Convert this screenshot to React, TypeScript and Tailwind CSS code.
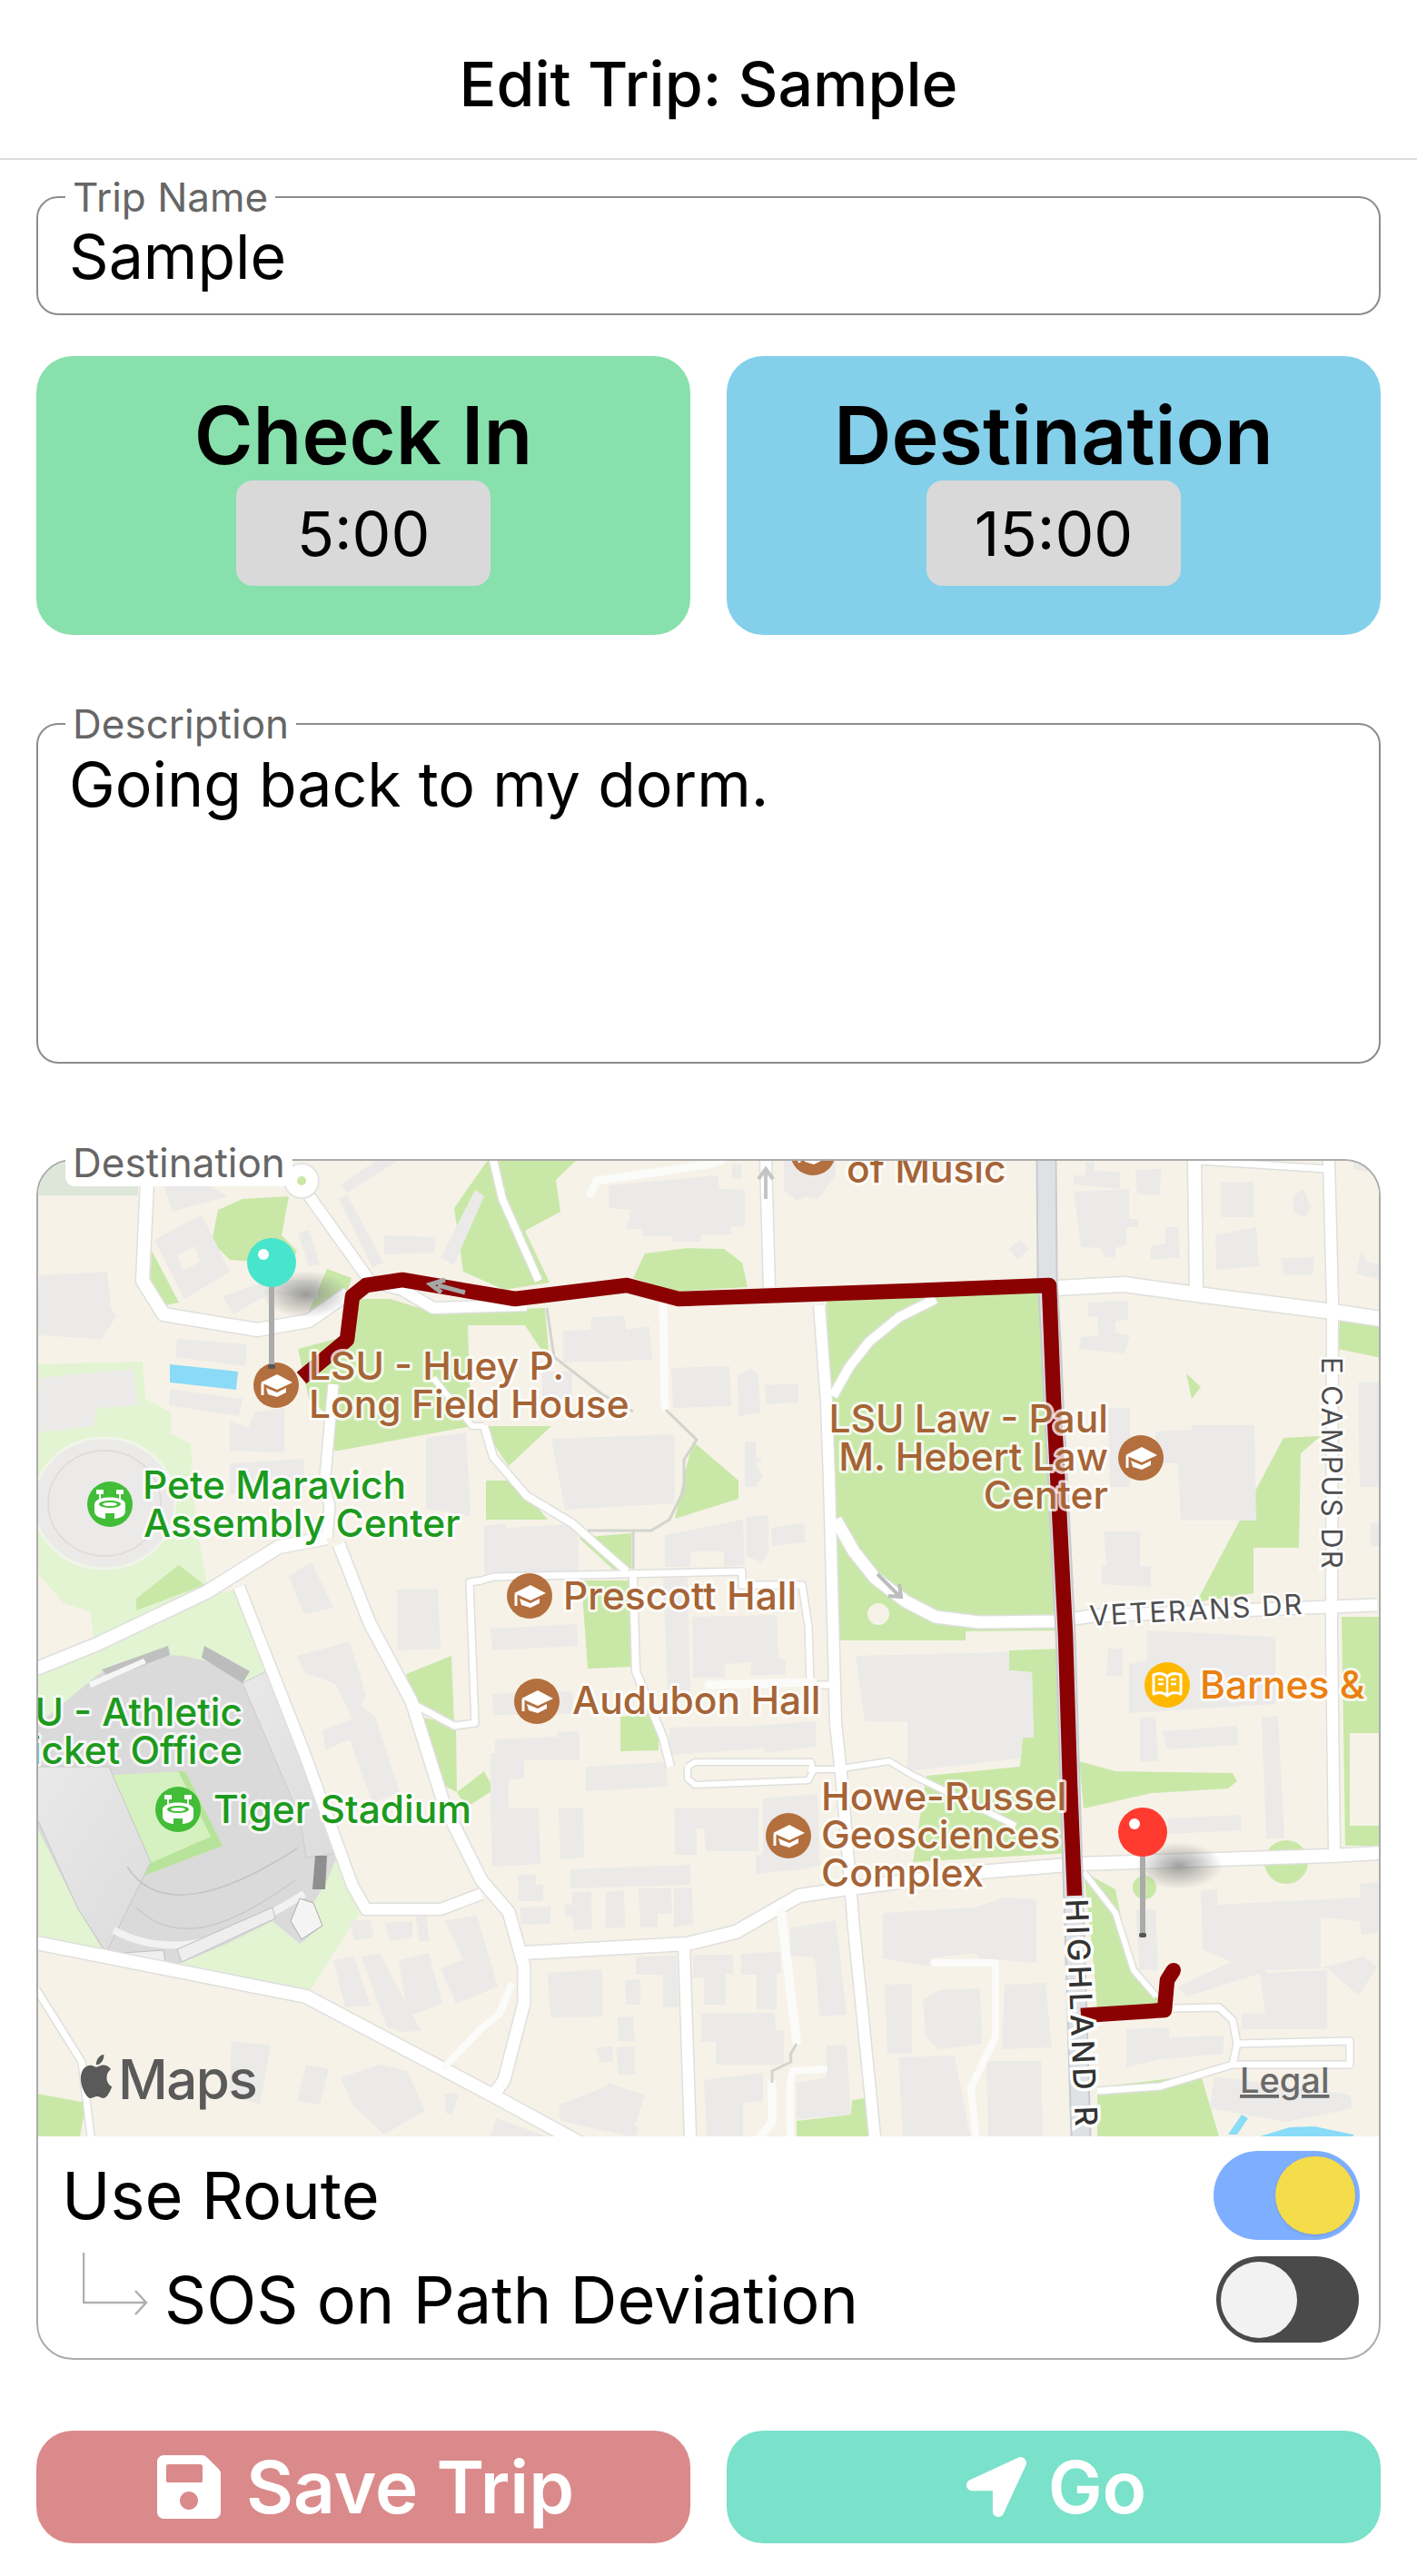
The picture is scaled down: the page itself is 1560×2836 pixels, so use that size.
import { FaSave, FaLocationArrow } from 'react-icons/fa'

const LAND = '#F6F2E8'
const GREEN = '#C9E8A8'
const PALE = '#E2F4D2'
const BLD = '#EBEAE8'
const WATER = '#8ADBF7'
const BROWN = '#A66436'
const DARKGREEN = '#1C9A1D'

const PALE_AREAS = [
  '40,1502 157,1499 160,1540 188,1555 188,1578 210,1590 215,1670 228,1745 103,1803 100,1775 70,1765 40,1730',
  '40,1840 227,1755 263,1750 388,2076 397,2104 337,2198 40,2139',
]

const GREENS = [
  '197,1723 225,1745 150,1773 150,1760',
  '240,1332 267,1320 318,1317 310,1360 327,1377 317,1400 293,1390 253,1387 233,1367',
  '167,1377 197,1434 168,1440 165,1420',
  '360,1397 387,1407 383,1420 340,1444',
  '537,1277 635,1277 612,1299 617,1334 578,1355 605,1412 555,1420 510,1400 500,1330',
  '328,1485 385,1470 390,1430 430,1430 477,1445 600,1440 605,1500 578,1459 515,1459 517,1520 520,1570 373,1597 360,1597 363,1560 340,1540',
  '530,1570 607,1570 560,1614',
  '697,1407 710,1380 757,1374 797,1375 817,1390 823,1417 743,1422',
  '910,1432 1160,1420 1180,1795 925,1797 915,1600',
  '763,1587 813,1630 813,1650 743,1672 753,1625',
  '535,1630 567,1630 603,1673 535,1673',
  '637,1693 695,1688 695,1727 675,1728',
  '640,1740 695,1740 695,1835 647,1837',
  '683,1890 725,1885 725,1927 683,1928',
  '447,1843 497,1823 500,1897 457,1873',
  '463,1890 502,1900 503,1973 483,1963',
  '503,1973 533,1950 540,1963 540,1973 513,1990',
  '924,1795 1063,1795 1063,1806 924,1806',
  '1111,1817 1170,1815 1178,2040 1005,2050 1020,1955 1123,1945 1126,1913 1138,1913 1136,1841 1111,1839',
  '1188,1939 1228,1950 1357,1952 1362,1961 1352,1969 1268,1974 1193,1991',
  '1193,2061 1228,2080 1243,2154 1273,2198 1278,2206 1208,2213 1203,2150',
  '1477,1780 1520,1780 1520,1908 1486,1908 1486,2010 1520,2010 1520,2032 1481,2032',
  '1208,2298 1322,2284 1342,2352 1208,2352',
  '877,2335 937,2328 938,2312 952,2310 957,2352 877,2352',
  '1475,1455 1520,1457 1520,1495 1473,1485',
  '1306,1512 1322,1527 1312,1540',
  '40,2305 95,2315 88,2352 40,2352',
]

const BUILDINGS = [
  '180,1304 230,1304 250,1317 190,1334',
  '43,1404 118,1400 122,1440 128,1449 112,1474 40,1470',
  '245,1427 297,1409 350,1409 350,1430 297,1424 257,1447',
  '328,1357 340,1354 352,1392 340,1394',
  '373,1320 382,1315 422,1390 410,1395',
  '423,1360 480,1362 478,1379 423,1381',
  '523,1310 533,1317 500,1392 485,1385',
  '375,1304 415,1277 440,1277 382,1313',
  '195,1474 272,1480 270,1504 193,1494',
  '187,1529 267,1540 263,1559 186,1547',
  '253,1565 273,1572 280,1555 313,1550 313,1599 253,1597',
  '43,1517 147,1507 152,1547 107,1550 103,1570 40,1577',
  '253,1611 335,1606 335,1640 253,1645',
  '469,1583 513,1577 518,1669 469,1661',
  '318,1735 343,1720 367,1770 335,1777',
  '437,1750 482,1749 485,1815 437,1817',
  '327,1823 385,1807 403,1867 397,1877 413,1890 440,1973 410,1985 385,1915 358,1927 355,1905 388,1892 370,1855 360,1850 335,1842',
  '385,2115 408,2113 411,2132 390,2137',
  '423,2117 454,2115 454,2132 429,2137',
  '457,2110 470,2110 472,2137 462,2137',
  '490,2115 525,2108 548,2187 502,2206 485,2167 510,2158',
  '367,2158 390,2154 408,2208 380,2210',
  '398,2154 418,2150 444,2200 464,2236 444,2237 426,2232',
  '439,2158 472,2150 487,2206 449,2220',
  '255,2247 298,2252 286,2317 252,2306',
  '337,2273 362,2278 352,2317 327,2313',
  '375,2287 418,2273 449,2280 467,2324 423,2350 388,2317',
  '490,2305 505,2305 498,2328 490,2326',
  '546,2332 602,2352 540,2352',
  '617,2317 673,2295 709,2306 694,2352 617,2335',
  '540,1990 593,1990 595,2052 542,2055',
  '540,1930 560,1930 560,1990 540,1990',
  '615,1990 642,1990 643,2045 617,2047',
  '743,1990 835,1990 835,2038 777,2038 775,2013 767,2013 767,2042 743,2042',
  '832,2042 902,2042 903,2053 883,2058 832,2063',
  '840,1980 900,1975 902,2042 840,2042',
  '628,2058 760,2053 760,2075 628,2079',
  '570,2064 590,2064 590,2075 598,2075 598,2093 571,2093',
  '573,2100 606,2099 606,2118 573,2119',
  '630,2083 651,2083 652,2123 632,2125 630,2110 622,2110 622,2097 630,2097',
  '667,2083 687,2081 688,2122 667,2123',
  '703,2079 739,2079 740,2107 724,2107 724,2121 705,2122',
  '742,2079 762,2078 763,2118 742,2122',
  '603,2172 663,2168 663,2220 606,2221',
  '700,2154 745,2153 747,2210 730,2210 730,2174 700,2174',
  '688,2180 705,2179 705,2207 689,2207',
  '680,2221 697,2220 699,2247 681,2247',
  '656,2254 674,2253 675,2270 661,2270',
  '678,2254 699,2253 699,2284 681,2284',
  '670,2293 710,2307 700,2337 660,2327',
  '617,2315 703,2342 700,2352 615,2330',
  '763,2152 807,2152 807,2173 799,2173 799,2207 775,2207 775,2177 763,2177',
  '816,2151 859,2149 860,2172 855,2172 855,2212 833,2212 833,2174 816,2174',
  '772,2217 853,2216 854,2235 863,2235 863,2273 788,2273 788,2248 772,2248',
  '775,2290 840,2282 840,2313 818,2315 818,2352 778,2352',
  '870,2123 920,2114 932,2218 902,2220 897,2155 870,2153',
  '877,2293 910,2287 910,2252 932,2252 937,2328 877,2333',
  '972,2106 1073,2100 1106,2089 1141,2091 1141,2161 1079,2156 1073,2150 1024,2156 1024,2165 972,2156',
  '974,2185 1004,2184 1004,2261 977,2261',
  '1016,2202 1034,2191 1079,2189 1081,2250 1034,2256 1019,2243',
  '1106,2185 1151,2183 1158,2254 1103,2256',
  '989,2265 1051,2263 1068,2352 994,2352',
  '1086,2269 1146,2269 1148,2352 1088,2352',
  '533,1680 557,1677 557,1682 636,1678 637,1730 533,1733',
  '607,1584 742,1579 743,1655 622,1662',
  '732,1690 818,1673 820,1723 797,1725 797,1708 760,1708 760,1725 732,1725',
  '822,1670 846,1668 846,1710 838,1720 822,1713',
  '849,1682 885,1677 887,1698 850,1702',
  '540,1793 635,1788 636,1812 542,1817',
  '730,1737 757,1737 760,1863 735,1860',
  '762,1780 855,1778 857,1825 865,1827 865,1843 827,1845 827,1830 798,1832 798,1847 763,1847',
  '542,1865 630,1862 632,1887 543,1888',
  '545,1915 613,1912 613,1907 638,1906 638,1938 577,1938 577,1958 558,1960 558,1937 545,1935',
  '645,1945 733,1940 735,1967 645,1972',
  '737,1902 832,1900 898,1895 898,1923 842,1930 840,1925 737,1932',
  '942,1823 1111,1819 1111,1839 1136,1841 1138,1913 1126,1913 1123,1936 999,1950 999,1895 952,1895',
  '1243,1832 1263,1828 1263,1795 1404,1802 1404,1876 1243,1886',
  '1220,1815 1236,1815 1236,1845 1218,1845',
  '1280,1906 1362,1900 1363,1921 1285,1926',
  '1255,1891 1272,1890 1275,1939 1255,1939',
  '1285,2002 1366,1998 1366,2015 1286,2019',
  '1389,1891 1407,1889 1414,2024 1394,2024',
  '1322,2082 1340,2080 1340,2097 1497,2089 1497,2074 1517,2072 1517,2128 1499,2130 1497,2115 1454,2111 1454,2167 1501,2154 1516,2165 1496,2197 1461,2167 1394,2169 1394,2224 1387,2172 1324,2147',
  '1297,2187 1360,2158 1389,2172 1307,2198',
  '1394,2172 1461,2169 1461,2234 1367,2234 1367,2217 1394,2217',
  '1240,2234 1287,2232 1287,2243 1347,2241 1347,2261 1277,2267 1240,2276',
  '1250,2102 1272,2102 1275,2169 1255,2169',
  '1337,2286 1486,2306 1489,2321 1417,2336 1332,2321',
  '1182,1312 1243,1309 1243,1342 1253,1342 1253,1351 1240,1351 1240,1370 1228,1374 1228,1384 1217,1384 1212,1374 1190,1373',
  '1182,1294 1195,1294 1195,1279 1205,1279 1205,1289 1233,1290 1233,1309 1182,1304',
  '1250,1288 1278,1287 1277,1315 1252,1315',
  '1267,1372 1283,1369 1283,1351 1297,1351 1299,1384 1267,1387',
  '1344,1302 1380,1301 1380,1340 1344,1340',
  '1338,1360 1383,1351 1386,1394 1339,1398',
  '1423,1317 1435,1309 1443,1329 1437,1340 1425,1335',
  '1410,1385 1447,1384 1445,1403 1414,1404',
  '1493,1402 1498,1379 1507,1390 1520,1392 1520,1409',
  '1490,1277 1520,1277 1520,1292 1490,1287',
  '1110,1375 1123,1365 1133,1375 1120,1387',
  '1198,1434 1242,1432 1242,1452 1228,1455 1228,1467 1244,1470 1238,1490 1188,1485 1190,1472 1210,1470 1208,1450 1198,1449',
  '1220,1550 1244,1550 1244,1637 1222,1637',
  '1272,1576 1312,1574 1312,1569 1381,1569 1383,1674 1300,1674 1297,1611 1272,1611',
  '1495,1522 1520,1522 1520,1637 1497,1637',
  '1215,1686 1255,1686 1255,1724 1267,1724 1267,1747 1213,1744 1213,1724 1218,1724',
  '1509,1677 1520,1677 1520,1702 1509,1702',
  '670,1305 790,1294 792,1309 820,1310 820,1350 805,1350 805,1359 772,1359 772,1367 740,1367 740,1361 708,1361 708,1353 689,1353 695,1332 670,1330',
  '806,1282 816,1282 816,1298 806,1298',
  '863,1277 920,1277 920,1295 900,1320 887,1317 877,1322 863,1310',
  '620,1465 650,1464 652,1450 687,1449 690,1464 715,1460 718,1497 620,1500',
  '597,1510 630,1510 630,1540 597,1540',
  '739,1506 803,1504 805,1548 741,1550',
  '812,1514 827,1506 835,1514 837,1555 813,1559',
  '842,1525 879,1523 879,1544 844,1546',
  '820,1587 832,1587 832,1605 840,1605 832,1612 840,1625 832,1637 820,1637',
]

// main streets, drawn twice: grey casing first, then white
const ROADS: { pts: string; w: number }[] = [
  { pts: '163,1277 157,1410 180,1447 283,1464 340,1454 383,1424', w: 14 },
  { pts: '332,1305 407,1410 443,1420 477,1440 580,1437', w: 12 },
  { pts: '367,1524 357,1637 363,1657 360,1693', w: 11 },
  { pts: '360,1693 307,1703 227,1753 107,1810 40,1837', w: 14 },
  { pts: '263,1747 335,1930 388,2076 403,2102 485,2102 530,2085', w: 12 },
  { pts: '373,1700 407,1787 453,1873 490,1990 530,2070 560,2105 577,2165 577,2205 555,2290 543,2307', w: 13 },
  { pts: '40,2139 337,2198 541,2306 640,2360', w: 14 },
  { pts: '577,2150 757,2140 810,2127 880,2087 927,2080 1078,2061 1188,2052 1466,2043 1520,2040', w: 14 },
  { pts: '843,1277 847,1417', w: 12 },
  { pts: '902,1437 910,1544 913,1630 920,1897 927,1963 940,2123 963,2352', w: 12 },
  { pts: '753,2140 760,2352', w: 12 },
  { pts: '1030,1430 990,1450 957,1477 935,1505 917,1537', w: 10 },
  { pts: '920,1673 940,1708 963,1737 997,1763 1030,1780 1078,1786 1163,1785 1203,1779 1516,1767', w: 13 },
  { pts: '1163,1418 1237,1414 1310,1424 1467,1444 1520,1452', w: 16 },
  { pts: '1315,1277 1317,1420', w: 14 },
  { pts: '1463,1277 1467,1434 1466,1800 1469,2039', w: 12 },
  { pts: '1320,1278 1462,1287', w: 7 },
  { pts: '543,1277 553,1320 593,1410', w: 8 },
  { pts: '533,1570 543,1604 580,1647 630,1677 690,1730', w: 8 },
  { pts: '477,1517 520,1570 533,1570', w: 6 },
  { pts: '530,1740 543,1736 817,1730 817,1745 883,1745 890,1790 892,1855 913,1855', w: 7 },
  { pts: '530,1740 517,1742 523,1897 500,1900 457,1877', w: 7 },
  { pts: '697,1735 700,1840 730,1913 738,1945', w: 8 },
  { pts: '757,1945 765,1940 893,1940 895,1950 890,1960 765,1965 757,1958 757,1945', w: 6 },
  { pts: '890,1948 920,1948 979,1939 1004,1954 1118,2010', w: 6 },
  { pts: '1208,2302 1277,2297 1357,2273 1486,2273 1486,2247 1362,2250 1357,2224 1342,2210 1292,2211', w: 7 },
  { pts: '1357,2273 1362,2250', w: 7 },
  { pts: '1193,2061 1228,2106 1248,2169 1273,2198', w: 6 },
  { pts: '40,2190 90,2270 100,2352', w: 7 },
]

// footpaths without a casing
const PATHS = [
  { pts: '650,1314 657,1300 780,1282 795,1277', w: 9 },
  { pts: '730,1437 732,1550', w: 9 },
  { pts: '860,2105 870,2190 877,2247', w: 10 },
  { pts: '907,2278 873,2280 870,2293 870,2352', w: 8 },
  { pts: '850,2293 850,2337 837,2352', w: 9 },
  { pts: '562,2187 550,2217 530,2233 490,2275', w: 8 },
  { pts: '1029,2161 1096,2161 1096,2243 1069,2298 1074,2350', w: 8 },
  { pts: '780,1855 895,1852', w: 9 },
]

const GREY_PATHS = [
  '733,1552 767,1585 753,1607 753,1640 737,1673 717,1685 647,1685',
  '697,1685 697,1727',
  '697,1554 663,1535 610,1494 602,1440',
  '877,2250 870,2262 871,2270 850,2280 850,2293',
]

const HIGHWAY = '1152,1277 1153,1407 1157,1477 1160,1543 1173,1800 1178,1965 1190,2352'

// the road label sits on the route between these two legs
const ROUTE_NORTH =
  '332,1517 382,1475 388,1427 403,1415 443,1409 567,1430 690,1415 747,1430 1030,1420 1155,1415 1160,1543 1173,1800 1178,1965 1183,2087'
const ROUTE_SOUTH = '1190,2219 1282,2213 1285,2180 1292,2169'

function MapText({ x, y, lines, fill, anchor = 'start', step = 42 }: { x: number; y: number; lines: string[]; fill: string; anchor?: 'start' | 'end'; step?: number }) {
  return (
    <text
      fontFamily="Inter, sans-serif"
      fontSize={42.5}
      fontWeight={500}
      fill={fill}
      stroke="#FFFFFF"
      strokeOpacity={0.8}
      strokeWidth={6}
      paintOrder="stroke"
      textAnchor={anchor}
      strokeLinejoin="round"
    >
      {lines.map((l, i) => (
        <tspan key={l} x={x} y={y + i * step}>
          {l}
        </tspan>
      ))}
    </text>
  )
}

function CapPoi({ x, y }: { x: number; y: number }) {
  return (
    <g transform={`translate(${x} ${y})`}>
      <circle r={25} fill="#B36F3E" />
      <path d="M1 -12 L18 -3 L1 5 L-17 -3 Z" fill="#FFFFFF" />
      <path d="M-11 3 L1 8 L11 3 L11 8 L1 13 L-9 10 Z" fill="#FFFFFF" />
      <path d="M-15 -2 L-15 11" stroke="#FFFFFF" strokeWidth={3} />
    </g>
  )
}

function StadiumPoi({ x, y }: { x: number; y: number }) {
  return (
    <g transform={`translate(${x} ${y})`}>
      <circle r={25} fill="#41BD37" />
      <path d="M-11 -4 V-14 M11 -4 V-14" stroke="#FFFFFF" strokeWidth={2} />
      <path d="M-15 -16 H-7 V-11 H-15 Z M7 -16 H15 V-11 H7 Z" fill="#FFFFFF" />
      <path d="M-17 0 C-17 -10 17 -10 17 0 V8 C17 14 8 16 5 16 V10 H-5 V16 C-8 16 -17 14 -17 8 Z" fill="#FFFFFF" />
      <ellipse cx={0} cy={0} rx={12} ry={4} fill="#41BD37" />
      <ellipse cx={0} cy={0} rx={8} ry={2} fill="#FFFFFF" />
    </g>
  )
}

function BookPoi({ x, y }: { x: number; y: number }) {
  return (
    <g transform={`translate(${x} ${y})`}>
      <circle r={25} fill="#FFB800" />
      <path d="M0 -9 C-4 -13 -10 -13 -15 -11 V10 C-10 8 -4 8 0 12 C4 8 10 8 15 10 V-11 C10 -13 4 -13 0 -9 Z" fill="none" stroke="#FFFFFF" strokeWidth={3} strokeLinejoin="round" />
      <path d="M0 -9 V12 M-10 -6 H-4 M-10 -1 H-4 M10 -6 H4 M10 -1 H4" stroke="#FFFFFF" strokeWidth={2.5} />
    </g>
  )
}

function Pin({ x, y, bottom, color }: { x: number; y: number; bottom: number; color: string }) {
  return (
    <g>
      <rect x={x - 3} y={y + 20} width={6} height={bottom - y - 20} fill="#ABABAB" />
      <rect x={x - 4} y={bottom - 4} width={8} height={5} rx={2} fill="#555555" />
      <circle cx={x} cy={y} r={27} fill={color} />
      <circle cx={x - 9} cy={y - 9} r={6} fill="#FFFFFF" />
    </g>
  )
}

function MapView() {
  return (
    <svg viewBox="42 1278 1476 1074" className="block h-[1074px] w-full" style={{ background: LAND }}>
      <defs>
        <radialGradient id="pinShadow">
          <stop offset="0%" stopColor="#6F6F6F" stopOpacity={0.65} />
          <stop offset="100%" stopColor="#6F6F6F" stopOpacity={0} />
        </radialGradient>
        <linearGradient id="stand" x1="0" y1="0" x2="1" y2="1">
          <stop offset="0%" stopColor="#E9E9E9" />
          <stop offset="100%" stopColor="#DCDCDC" />
        </linearGradient>
      </defs>

      <rect x={42} y={1278} width={110} height={38} fill="#DDE6D8" />
      {PALE_AREAS.map((p) => (
        <polygon key={p} points={p} fill={PALE} />
      ))}
      {GREENS.map((p) => (
        <polygon key={p} points={p} fill={GREEN} />
      ))}
      <circle cx={1416} cy={2050} r={24} fill={GREEN} />
      <circle cx={1260} cy={2078} r={13} fill={GREEN} />
      <circle cx={967} cy={1777} r={12} fill={LAND} />
      <polygon points="1413,1583 1454,1581 1432,1600 1430,1704 1380,1704 1380,1754 1317,1764" fill={GREEN} />

      <polygon points="1367,2328 1374,2332 1362,2350 1352,2350" fill={WATER} />
      <polygon points="1387,2352 1420,2342 1447,2341 1490,2350 1490,2352" fill={WATER} />
      <polygon points="187,1502 262,1510 260,1530 187,1522" fill={WATER} />

      {BUILDINGS.map((p) => (
        <polygon key={p} points={p} fill={BLD} />
      ))}
      <polygon points="170,1365 222,1337 253,1400 203,1430" fill={BLD} />
      <polygon points="195,1382 215,1372 220,1389 202,1399" fill={LAND} />

      {/* Pete Maravich roof */}
      <ellipse cx={115} cy={1655} rx={78} ry={72} fill={BLD} stroke="#F1F5E8" strokeWidth={3} />
      <ellipse cx={115} cy={1655} rx={62} ry={58} fill="none" stroke="#DADAD8" strokeWidth={1.5} />

      {/* Tiger Stadium */}
      <path d="M40 1900 L100 1850 C140 1815 225 1810 267 1853 L297 1838 L373 2040 L360 2070 L345 2095 L355 2120 L330 2140 L300 2115 L250 2140 L190 2165 L140 2162 L115 2150 L85 2100 L40 2010 Z" fill="#DADADA" />
      <polygon points="125,1954 204,1950 245,2032 153,2067 140,2050" fill="#D6F1C0" />
      <polygon points="196,1950 204,1950 245,2032 153,2067 150,2058 232,2022" fill="#B8E39A" />
      <polygon points="40,1945 120,1945 166,2050 117,2150 85,2100 40,2000" fill="url(#stand)" stroke="#C6C6C6" strokeWidth={1} />
      <polygon points="267,1853 297,1838 373,2040 337,2045 330,2000" fill="url(#stand)" stroke="#CCCCCC" strokeWidth={1} />
      <path d="M140 2055 C175 2110 250 2085 327 2035" fill="none" stroke="#C4C4C4" strokeWidth={1.5} />
      <path d="M150 2100 C200 2150 270 2110 325 2070" fill="none" stroke="#C9C9C9" strokeWidth={1.5} />
      <path d="M125 2125 C200 2165 270 2125 335 2085" fill="none" stroke="#F2F2F2" strokeWidth={8} />
      <polygon points="112,1838 185,1812 187,1822 120,1848" fill="#C0C0C0" />
      <polygon points="225,1812 275,1840 267,1853 222,1825" fill="#BCBCBC" />
      <polygon points="98,1852 158,1826 161,1831 100,1858" fill="#F6F6F6" />
      <polygon points="347,2043 360,2043 358,2080 344,2080" fill="#8F8F8F" />
      <polygon points="330,2090 345,2095 355,2120 332,2135 320,2115" fill="#F4F4F4" stroke="#ABABAB" strokeWidth={1} />
      <polygon points="135,2150 180,2147 182,2162 140,2162" fill="#F0F0F0" stroke="#BFBFBF" strokeWidth={1} />
      <polygon points="195,2146 300,2100 303,2112 200,2160" fill="#EEEEEE" stroke="#BFBFBF" strokeWidth={1} />

      {ROADS.map((r) => (
        <polyline key={`c${r.pts}`} points={r.pts} fill="none" stroke="#DFDFDD" strokeWidth={r.w + 3} strokeLinejoin="round" />
      ))}
      {ROADS.map((r) => (
        <polyline key={r.pts} points={r.pts} fill="none" stroke="#FFFFFF" strokeWidth={r.w} strokeLinejoin="round" />
      ))}
      {PATHS.map((r) => (
        <polyline key={r.pts} points={r.pts} fill="none" stroke="#FBFBF9" strokeWidth={r.w} strokeLinejoin="round" strokeLinecap="round" />
      ))}
      {GREY_PATHS.map((p) => (
        <polyline key={p} points={p} fill="none" stroke="#D2D4CE" strokeWidth={3} strokeLinejoin="round" />
      ))}
      <circle cx={332} cy={1300} r={19} fill="#FFFFFF" stroke="#E4E4E2" strokeWidth={2} />
      <circle cx={332} cy={1300} r={5} fill={GREEN} />

      {/* Highland Rd */}
      <polyline points={HIGHWAY} fill="none" stroke="#C9CBCF" strokeWidth={23} />
      <polyline points={HIGHWAY} fill="none" stroke="#DFE1E5" strokeWidth={19} />

      {/* one way arrows */}
      <path d="M843 1320 V1290 M835 1298 L843 1287 L851 1298" fill="none" stroke="#C4C4C4" strokeWidth={4} />
      <path d="M966 1733 L990 1757 M978 1757 L992 1758 L990 1744" fill="none" stroke="#BDBDBD" strokeWidth={4} />

      {/* pin shadows stay under the route */}
      <ellipse cx={337} cy={1425} rx={48} ry={26} fill="url(#pinShadow)" />
      <ellipse cx={1298} cy={2054} rx={48} ry={26} fill="url(#pinShadow)" />

      <polyline points={ROUTE_NORTH} fill="none" stroke="#8B0000" strokeWidth={16.5} strokeLinejoin="round" />
      <polyline points={ROUTE_SOUTH} fill="none" stroke="#8B0000" strokeWidth={16.5} strokeLinejoin="round" />
      <circle cx={1292} cy={2169} r={8} fill="#8B0000" />
      <path d="M512 1423 L482 1415 M490 1409 L474 1414 L486 1423" fill="none" stroke="#A6A6A6" strokeWidth={5} />

      <MapText x={340} y={1519} lines={['LSU - Huey P.', 'Long Field House']} fill={BROWN} />
      <MapText x={157} y={1650} lines={['Pete Maravich']} fill={DARKGREEN} />
      <MapText x={158} y={1692} lines={['Assembly Center']} fill={DARKGREEN} />
      <MapText x={1220} y={1577} lines={['LSU Law - Paul', 'M. Hebert Law', 'Center']} fill={BROWN} anchor="end" />
      <MapText x={620} y={1772} lines={['Prescott Hall']} fill={BROWN} />
      <MapText x={630} y={1887} lines={['Audubon Hall']} fill={BROWN} />
      <MapText x={904} y={1993} lines={['Howe-Russel', 'Geosciences', 'Complex']} fill={BROWN} />
      <MapText x={1321} y={1870} lines={['Barnes &']} fill="#EB7F0F" />
      <MapText x={932} y={1302} lines={['of Music']} fill={BROWN} />
      <MapText x={267} y={1900} lines={['LSU - Athletic', 'Ticket Office']} fill={DARKGREEN} anchor="end" />
      <MapText x={235} y={2007} lines={['Tiger Stadium']} fill={DARKGREEN} />

      <g fontFamily="Inter, sans-serif" fontSize={31} fill="#4F4F4F" stroke="#FFFFFF" strokeWidth={5} paintOrder="stroke" letterSpacing={2}>
        <text transform="translate(1200 1790) rotate(-3.2)">VETERANS DR</text>
        <text transform="translate(1455 1494) rotate(90)">E CAMPUS DR</text>
        <text transform="translate(1173 2091) rotate(87.5)" fontSize={34} fontWeight={500} letterSpacing={4.5} fill="#333333" strokeWidth={7}>
          HIGHLAND R
        </text>
      </g>

      <CapPoi x={304} y={1525} />
      <CapPoi x={583} y={1757} />
      <CapPoi x={591} y={1873} />
      <CapPoi x={1256} y={1605} />
      <CapPoi x={868} y={2021} />
      <CapPoi x={895} y={1269} />
      <StadiumPoi x={121} y={1656} />
      <StadiumPoi x={196} y={1992} />
      <BookPoi x={1285} y={1855} />

      <Pin x={299} y={1390} bottom={1506} color="#47E5CC" />
      <Pin x={1258} y={2017} bottom={2132} color="#FF3B30" />

      <path
        transform="translate(85 2262) scale(1.75 2)"
        fill="#5A5A5A"
        d="M12.152 6.896c-.948 0-2.415-1.078-3.96-1.04-2.04.027-3.91 1.183-4.961 3.014-2.117 3.675-.546 9.103 1.519 12.09 1.013 1.454 2.208 3.09 3.792 3.039 1.52-.065 2.09-.987 3.935-.987 1.831 0 2.35.987 3.96.948 1.637-.026 2.676-1.48 3.676-2.948 1.156-1.688 1.636-3.325 1.662-3.415-.039-.013-3.182-1.221-3.22-4.857-.026-3.04 2.48-4.494 2.597-4.559-1.429-2.09-3.623-2.324-4.39-2.376-2-.156-3.675 1.09-4.61 1.09zM15.53 3.83c.843-1.012 1.4-2.427 1.245-3.83-1.207.052-2.662.805-3.532 1.818-.78.896-1.454 2.338-1.273 3.714 1.338.104 2.715-.688 3.559-1.701"
      />
      <text x={130} y={2311} fontFamily="Inter, sans-serif" fontSize={60} fontWeight={500} fill="#5A5A5A" letterSpacing={-1.5}>
        Maps
      </text>
      <text x={1365} y={2304} fontFamily="Inter, sans-serif" fontSize={38} fontWeight={500} fill="#6A6A6A" textDecoration="underline">
        Legal
      </text>
    </svg>
  )
}

function FieldLabel({ text, className }: { text: string; className: string }) {
  return (
    <span className={`absolute rounded-[10px] bg-white px-2 text-[44px] leading-[52px] text-[#666666] ${className}`}>
      {text}
    </span>
  )
}

function TimeCard({ title, time, color }: { title: string; time: string; color: string }) {
  return (
    <div className={`flex h-[307px] flex-col items-center rounded-[40px] pt-[38px] ${color}`}>
      <div className="text-[88px] font-semibold leading-[99px] text-black">{title}</div>
      <div className="flex h-[116px] w-[280px] items-center justify-center rounded-[18px] bg-[#D9D9D9] text-[68px] text-black">
        {time}
      </div>
    </div>
  )
}

export default function App() {
  return (
    <div className="flex w-full flex-col bg-white pb-[36px] font-['Inter',sans-serif] text-black">
      <div className="flex h-[176px] items-center justify-center border-b-2 border-[#DDDDDD] pt-[10px] text-[68px] font-medium">
        Edit Trip: Sample
      </div>

      <div className="flex flex-col px-[40px]">
        <div className="relative mt-[40px] flex h-[131px] items-center rounded-[24px] border-2 border-[#8C8C8C] pl-[34px] text-[68px]">
          <FieldLabel text="Trip Name" className="left-[30px] top-[-27px]" />
          Sample
        </div>

        <div className="mt-[45px] grid grid-cols-2 gap-[40px]">
          <TimeCard title="Check In" time="5:00" color="bg-[#88E0AD]" />
          <TimeCard title="Destination" time="15:00" color="bg-[#84D0EA]" />
        </div>

        <div className="relative mt-[97px] h-[375px] rounded-[24px] border-2 border-[#8C8C8C] pl-[34px] pt-[24px] text-[68px] leading-[82px]">
          <FieldLabel text="Description" className="left-[30px] top-[-27px]" />
          Going back to my dorm.
        </div>

        <div className="relative mt-[105px] h-[1322px]">
          <div className="h-full overflow-hidden rounded-[40px] border-2 border-[#ABABAB]">
            <MapView />
            <div className="flex flex-col pt-[7px]">
              <div className="flex h-[115px] items-center justify-between pl-[26px] pr-[21px]">
                <span className="text-[72px]">Use Route</span>
                <div className="flex h-[98px] w-[161px] items-center justify-end rounded-full bg-[#7EAEFF] pr-[5px]">
                  <div className="h-[86px] w-[88px] rounded-full bg-[#F5DC4A] shadow-sm" />
                </div>
              </div>
              <div className="flex h-[115px] items-center justify-between pl-[49px] pr-[22px]">
                <div className="flex items-center">
                  <svg width="72" height="72" viewBox="0 0 72 72" className="mb-[32px]" fill="none" stroke="#B0B0B0" strokeWidth="2.5">
                    <path d="M1 0 V55 H70 M58 42 L70 55 L58 68" />
                  </svg>
                  <span className="ml-[18px] text-[72px]">SOS on Path Deviation</span>
                </div>
                <div className="flex h-[95px] w-[157px] items-center rounded-full bg-[#4A4A4A] pl-[5px]">
                  <div className="h-[84px] w-[84px] rounded-full bg-[#F2F2F2]" />
                </div>
              </div>
            </div>
          </div>
          <FieldLabel text="Destination" className="left-[32px] top-[-22px]" />
        </div>

        <div className="mt-[78px] grid grid-cols-2 gap-[40px]">
          <div className="flex h-[124px] items-center justify-center gap-[23px] rounded-[40px] bg-[#DA8A8A] text-[80px] font-semibold text-white">
            <FaSave size={80} />
            Save Trip
          </div>
          <div className="flex h-[124px] items-center justify-center gap-[24px] rounded-[40px] bg-[#7AE1CA] pl-[6px] text-[80px] font-semibold text-white">
            <FaLocationArrow size={66} />
            Go
          </div>
        </div>
      </div>
    </div>
  )
}
